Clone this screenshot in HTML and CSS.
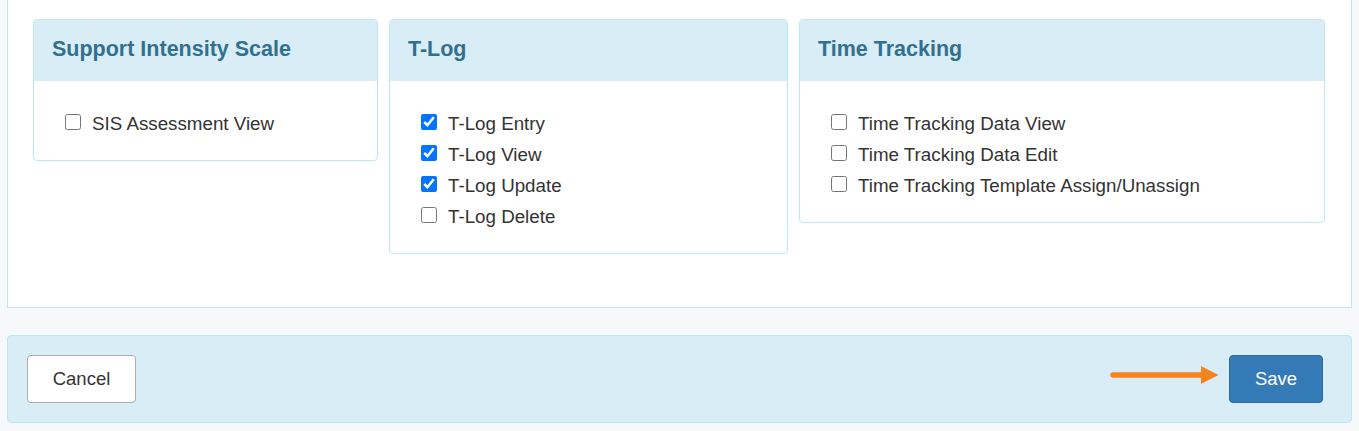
FILE: index.html
```html
<!DOCTYPE html>
<html lang="en">
  <head>
    <meta charset="UTF-8">
    <meta name="viewport" content="width=device-width, initial-scale=1.0">
    <title>Permissions</title>
    <link rel="stylesheet" href="styles.css">
  </head>
  <body>
    <div class="page">
      <div class="perm-panel">
        <div class="perm-grid">

          <div class="perm-card">
            <div class="perm-head"><h3 class="perm-title">Support Intensity Scale</h3></div>
            <div class="perm-body">
              <label class="perm-item"><input type="checkbox">SIS Assessment View</label>
            </div>
          </div>

          <div class="perm-card">
            <div class="perm-head"><h3 class="perm-title">T-Log</h3></div>
            <div class="perm-body">
              <label class="perm-item"><input type="checkbox" checked>T-Log Entry</label>
              <label class="perm-item"><input type="checkbox" checked>T-Log View</label>
              <label class="perm-item"><input type="checkbox" checked>T-Log Update</label>
              <label class="perm-item"><input type="checkbox">T-Log Delete</label>
            </div>
          </div>

          <div class="perm-card">
            <div class="perm-head"><h3 class="perm-title">Time Tracking</h3></div>
            <div class="perm-body">
              <label class="perm-item"><input type="checkbox">Time Tracking Data View</label>
              <label class="perm-item"><input type="checkbox">Time Tracking Data Edit</label>
              <label class="perm-item"><input type="checkbox">Time Tracking Template Assign/Unassign</label>
            </div>
          </div>

        </div>
      </div>

      <div class="form-footer">
        <button type="button" class="btn btn-cancel">Cancel</button>
        <svg class="hint-arrow" width="109" height="18" viewBox="0 0 109 18">
          <line x1="3" y1="9" x2="93" y2="9" stroke="#f5841f" stroke-width="5.5" stroke-linecap="round"/>
          <polygon points="91,0 108.5,9 91,18" fill="#f5841f"/>
        </svg>
        <button type="button" class="btn btn-save">Save</button>
      </div>
    </div>
  </body>
</html>
```

FILE: styles.css
```css
html {
  font-family: "Liberation Sans", Arial, sans-serif;
}

body {
  margin: 0;
  background-color: #f6f8f9;
  color: #333;
}

.page {
  padding: 0 7px;
}

.perm-panel {
  background-color: #fff;
  border: 1px solid #c6e4ed;
  border-top: none;
  padding: 19px 25px 53px 25px;
}

.perm-grid {
  display: grid;
  grid-template-columns: 345px 399px 526px;
  column-gap: 11px;
  align-items: start;
}

.perm-card {
  border: 1px solid #bce8f1;
  border-radius: 4px;
  background-color: #fff;
  overflow: hidden;
}

.perm-head {
  background-color: #d9edf7;
  padding: 17px 19px 20px 18px;
}

.perm-title {
  margin: 0;
  font-size: 21.5px;
  line-height: 24px;
  font-weight: bold;
  color: #31708f;
}

.perm-body {
  padding: 27px 20px 21px 31px;
}

.perm-item {
  display: flex;
  align-items: flex-start;
  font-size: 18.75px;
  line-height: 31px;
  color: #333;
}

.perm-item input {
  width: 16px;
  height: 16px;
  margin: 6px 11px 0 0;
}

.form-footer {
  display: flex;
  align-items: center;
  margin-top: 27px;
  background-color: #d9edf7;
  border: 1px solid #bce8f1;
  border-radius: 4px;
  padding: 19px 28px 19px 19px;
}

.btn {
  height: 48px;
  border-radius: 4px;
  font-family: "Liberation Sans", Arial, sans-serif;
  font-size: 18.5px;
  cursor: pointer;
}

.btn-cancel {
  width: 109px;
  background-color: #fff;
  border: 1px solid #adadad;
  color: #333;
}

.hint-arrow {
  margin-left: auto;
  margin-right: 10px;
  align-self: flex-start;
  margin-top: 11px;
}

.btn-save {
  width: 94px;
  background-color: #337ab7;
  border: 1px solid #2e6da4;
  color: #fff;
}
```
